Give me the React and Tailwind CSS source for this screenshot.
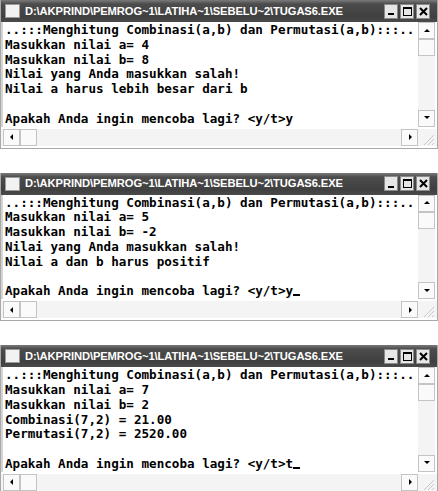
import React from 'react';

const TITLE = 'D:\\AKPRIND\\PEMROG~1\\LATIHA~1\\SEBELU~2\\TUGAS6.EXE';
const HEAD = '..:::Menghitung Combinasi(a,b) dan Permutasi(a,b):::..';

const windows = [
  {
    lines: [HEAD, 'Masukkan nilai a= 4', 'Masukkan nilai b= 8', 'Nilai yang Anda masukkan salah!', 'Nilai a harus lebih besar dari b', '', 'Apakah Anda ingin mencoba lagi? <y/t>y'],
    cursor: false,
  },
  {
    lines: [HEAD, 'Masukkan nilai a= 5', 'Masukkan nilai b= -2', 'Nilai yang Anda masukkan salah!', 'Nilai a dan b harus positif', '', 'Apakah Anda ingin mencoba lagi? <y/t>y'],
    cursor: true,
  },
  {
    lines: [HEAD, 'Masukkan nilai a= 7', 'Masukkan nilai b= 2', 'Combinasi(7,2) = 21.00', 'Permutasi(7,2) = 2520.00', '', 'Apakah Anda ingin mencoba lagi? <y/t>t'],
    cursor: true,
  },
];

const Arrow = ({ dir }) => {
  const pts = {
    up: '1,5 4,2 7,5',
    down: '1,2 4,5 7,2',
    left: '5,1 2,4 5,7',
    right: '3,1 6,4 3,7',
  };
  return (
    <svg width="8" height="8" viewBox="0 0 8 8">
      <polygon points={pts[dir]} fill="#000" />
    </svg>
  );
};

const ScrollBtn = ({ dir }) => (
  <div className="w-[17px] h-[17px] shrink-0 flex items-center justify-center bg-[#fafafa] border border-[#c4c4c4]">
    {dir ? <Arrow dir={dir} /> : null}
  </div>
);

const TitleBtn = ({ children }) => (
  <div className="w-[14px] h-[15px] flex items-center justify-center bg-[#e6e6e6] border border-[#8a8a8a] text-black">
    {children}
  </div>
);

const ConsoleWindow = ({ lines, cursor }) => (
  <div className="flex flex-col border border-[#a8a8a8] border-t-0 bg-white w-full shrink-0">
    <div className="h-[22px] flex items-center pl-[4px] pr-[7px] bg-[linear-gradient(to_bottom,#7a7a7a,#4c4c4c_18%,#404040_75%,#4a4a4a)]">
      <div className="w-[15px] h-[14px] bg-[#f2f2f2] border border-[#9a9a9a] shrink-0" />
      <div className="ml-[5px] flex-1 text-white font-bold text-[11.2px] tracking-[-0.1px] font-['Liberation_Sans',Arial,sans-serif] whitespace-nowrap overflow-hidden">
        {TITLE}
      </div>
      <div className="flex gap-[2px]">
        <TitleBtn>
          <span className="block w-[6px] h-[2px] bg-black mt-[6px]" />
        </TitleBtn>
        <TitleBtn>
          <span className="block w-[9px] h-[9px] border border-black border-t-2" />
        </TitleBtn>
        <TitleBtn>
          <svg width="9" height="9" viewBox="0 0 9 9">
            <path d="M1 1 L8 8 M8 1 L1 8" stroke="#000" strokeWidth="2" />
          </svg>
        </TitleBtn>
      </div>
    </div>
    <div className="flex border-l-2 border-[#d4d4d4]">
      <div className="flex-1 pl-[2px] pt-[1px] font-['DejaVu_Sans_Mono',monospace] font-bold text-[12.6px] leading-[14.8px] text-black whitespace-pre overflow-hidden">
        {lines.map((l, i) => (
          <div key={i} className="h-[14.8px]">
            {l}
            {cursor && i === lines.length - 1 ? <span className="inline-block w-[7px] h-[2px] bg-black align-[-1px]" /> : null}
          </div>
        ))}
      </div>
      <div className="w-[17px] mr-[2px] flex flex-col bg-[#f4f4f4]">
        <ScrollBtn dir="up" />
        <ScrollBtn />
        <div className="flex-1" />
        <ScrollBtn dir="down" />
      </div>
    </div>
    <div className="flex h-[17px] pl-[2px] mt-[2px] mb-[2px] bg-[#f4f4f4]">
      <ScrollBtn dir="left" />
      <ScrollBtn />
      <div className="flex-1" />
      <ScrollBtn dir="right" />
      <div className="w-[19px] h-[17px] flex items-end justify-end pr-[2px]">
        <svg width="12" height="12" viewBox="0 0 12 12">
          <path d="M11 1 L1 11 M11 5 L5 11 M11 9 L9 11" stroke="#c8c8c8" strokeWidth="1" />
        </svg>
      </div>
    </div>
  </div>
);

export default function App() {
  return (
    <div className="w-[438px] h-[491px] bg-white flex flex-col gap-[24px] overflow-hidden">
      {windows.map((w, i) => (
        <ConsoleWindow key={i} lines={w.lines} cursor={w.cursor} />
      ))}
    </div>
  );
}
